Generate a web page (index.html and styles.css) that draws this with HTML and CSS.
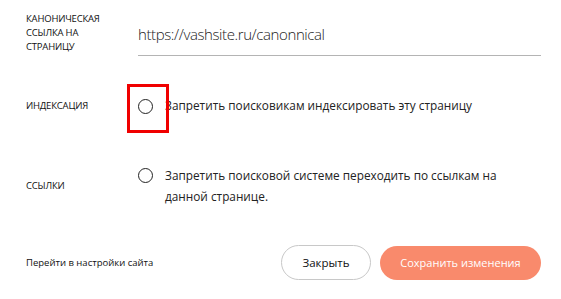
FILE: index.html
```html
<!DOCTYPE html>
<html lang="ru">
<head>
    <meta charset="UTF-8">
    <meta name="viewport" content="width=device-width, initial-scale=1.0">
    <title>Настройки страницы</title>
    <link rel="stylesheet" href="styles.css">
</head>
<body>
    <section class="page_settings">
        <div class="set_row canonical_row">
            <div class="set_label">Каноническая ссылка на страницу</div>
            <div class="set_input">https://vashsite.ru/canonnical</div>
        </div>
        <div class="set_row index_row">
            <div class="set_label">Индексация</div>
            <label class="option">
                <span class="radio highlighted"></span>
                <span class="option_text">Запретить поисковикам индексировать эту страницу</span>
            </label>
        </div>
        <div class="set_row links_row">
            <div class="set_label">Ссылки</div>
            <label class="option">
                <span class="radio"></span>
                <span class="option_text">Запретить поисковой системе переходить по ссылкам на данной странице.</span>
            </label>
        </div>
        <div class="footer_row">
            <a class="site_link">Перейти в настройки сайта</a>
            <div class="buttons">
                <button class="btn btn_close">Закрыть</button>
                <button class="btn btn_save">Сохранить изменения</button>
            </div>
        </div>
    </section>
</body>
</html>
```

FILE: styles.css
```css
*{
    margin:0;
    padding:0;
    box-sizing:border-box;
}
body{
    background-color:#ffffff;
    font-family:"Open Sans", sans-serif;
    color:#000000;
}
.page_settings{
    width:561px;
    padding:12px 20px 0 26px;
}
.set_row{
    display:grid;
    grid-template-columns:112px 1fr;
    align-items:center;
}
.set_label{
    font-size:9.5px;
    line-height:14px;
    text-transform:uppercase;
    letter-spacing:-0.2px;
    color:#111111;
}
.canonical_row{
    align-items:start;
}
.canonical_row .set_label{
    width:85px;
}
.set_input{
    margin-top:12px;
    padding-bottom:11px;
    font-size:15px;
    line-height:20px;
    font-weight:300;
    letter-spacing:-0.4px;
    color:#222222;
    border-bottom:1px solid #b4b4b4;
}
.index_row{
    margin-top:39px;
}
.links_row{
    margin-top:49px;
}
.option{
    display:flex;
    align-items:flex-start;
}
.radio{
    position:relative;
    flex-shrink:0;
    width:15px;
    height:15px;
    margin-top:3px;
    margin-right:12px;
    border:1px solid #222222;
    border-radius:50%;
}
.index_row .radio{
    margin-top:4px;
}
.highlighted::after{
    content:"";
    position:absolute;
    left:-12px;
    top:-16px;
    width:36px;
    height:43px;
    border:3px solid #f00000;
}
.option_text{
    font-size:11.8px;
    line-height:21px;
    color:#222222;
}
.links_row .option_text{
    max-width:345px;
}
.footer_row{
    margin-top:38px;
    display:flex;
    justify-content:space-between;
    align-items:center;
}
.site_link{
    font-size:9.5px;
    color:#111111;
}
.buttons{
    display:flex;
    align-items:center;
    gap:9px;
}
.btn{
    height:35px;
    border-radius:18px;
    font-family:"Open Sans", sans-serif;
    font-size:11.5px;
    cursor:pointer;
}
.btn_close{
    width:90px;
    background-color:#ffffff;
    border:1px solid #c8c8c8;
    color:#111111;
}
.btn_save{
    width:161px;
    height:34px;
    background-color:#f98a6c;
    border:none;
    color:#ffffff;
    font-size:11px;
}
```
